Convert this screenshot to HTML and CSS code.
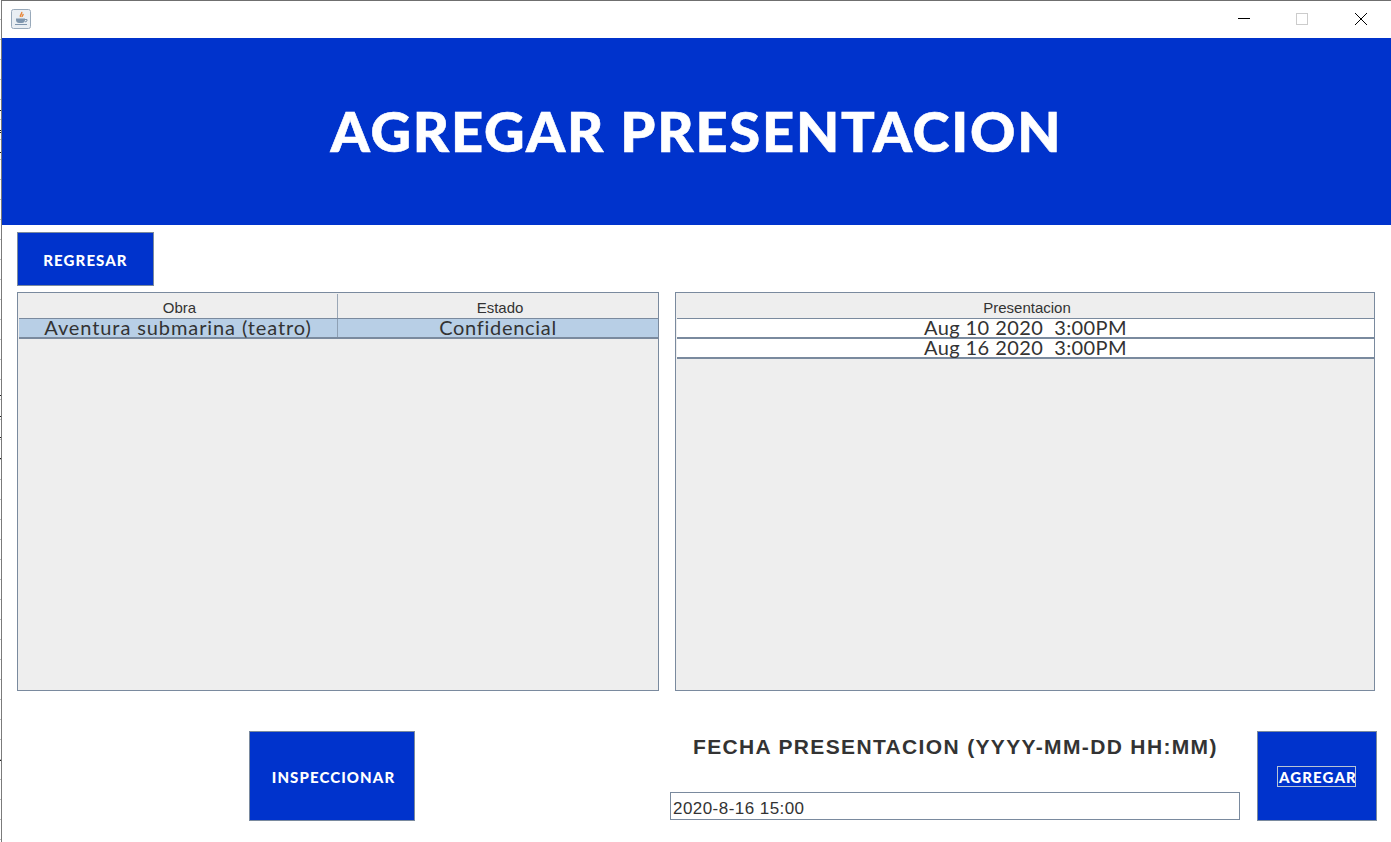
FILE: index.html
```html
<!DOCTYPE html>
<html lang="es">
<head>
<meta charset="utf-8">
<title>Agregar presentacion</title>
<link rel="stylesheet" href="styles.css">
</head>
<body>
<div class="window">
  <header class="titlebar">
    <svg class="app-icon" width="20" height="20" viewBox="0 0 20 20">
      <rect x="0.5" y="0.5" width="19" height="19" rx="2" fill="#e9eef3" stroke="#98a9ba"/>
      <path d="M10.500 3c1.500 1.500-2 2.500-1 5M12 5c.5 1.200-1.200 1.500-.8 3" fill="none" stroke="#e8873a" stroke-width="1.500"/>
      <path d="M5 9.500h9v1.500c0 1.800-1.500 3-3 3H8c-1.500 0-3-1.200-3-3z" fill="#7e95ad"/>
      <path d="M14 10.500h2v1.500l-2 1M4 15.500h12" fill="none" stroke="#7e95ad"/>
    </svg>
    <div class="win-controls">
      <svg width="14" height="14" viewBox="0 0 14 14"><path d="M0 6.500h12" stroke="#000" fill="none"/></svg>
      <svg width="14" height="14" viewBox="0 0 14 14"><rect x="0.500" y="1.500" width="11" height="11" stroke="#ccc" fill="none"/></svg>
      <svg width="14" height="14" viewBox="0 0 14 14"><path d="M1 1l12 12M13 1L1 13" stroke="#000" fill="none"/></svg>
    </div>
  </header>
  <div class="banner"><h1>AGREGAR PRESENTACION</h1></div>
  <main class="content">
    <div class="back-row"><button class="btn btn-back">REGRESAR</button></div>
    <div class="tables">
      <section class="table-box table-left">
        <div class="row head"><div class="cell">Obra</div><div class="cell">Estado</div></div>
        <div class="row data selected"><div class="cell">Aventura submarina (teatro)</div><div class="cell">Confidencial</div></div>
      </section>
      <section class="table-box table-right">
        <div class="row head"><div class="cell">Presentacion</div></div>
        <div class="row data plain"><div class="cell">Aug 10 2020 &nbsp;3:00PM</div></div>
        <div class="row data plain"><div class="cell">Aug 16 2020 &nbsp;3:00PM</div></div>
      </section>
    </div>
    <div class="bottom">
      <button class="btn btn-inspect">INSPECCIONAR</button>
      <div class="date-group">
        <label class="date-label" for="fecha">FECHA PRESENTACION (YYYY-MM-DD HH:MM)</label>
        <input class="date-input" id="fecha" type="text" value="2020-8-16 15:00">
      </div>
      <button class="btn btn-add"><span class="focus">AGREGAR</span></button>
    </div>
  </main>
</div>
</body>
</html>
```
FILE: styles.css
```css
* { box-sizing: border-box; }
html, body { margin: 0; padding: 0; background: #fff; }
body {
  width: 1391px;
  height: 842px;
  overflow: hidden;
  background-color: #fff;
  background-image:
    linear-gradient(#222, #222), linear-gradient(#222, #222), linear-gradient(#222, #222),
    linear-gradient(#222, #222), linear-gradient(#222, #222), linear-gradient(#222, #222),
    linear-gradient(#222, #222), linear-gradient(#222, #222), linear-gradient(#222, #222),
    repeating-linear-gradient(#fff 0 19px, #bbb 19px 20px);
  background-size: 1px 1px, 1px 1px, 1px 1px, 1px 1px, 1px 1px, 1px 1px, 1px 1px, 1px 1px, 1px 1px, 1px 842px;
  background-position: 0 110px, 0 130px, 0 132px, 0 152px, 0 395px, 0 416px, 0 437px, 0 458px, 0 760px, 0 0;
  background-repeat: no-repeat;
}

.window {
  width: 1390px;
  height: 842px;
  margin-left: 1px;
  border-top: 1px solid #6f6f6f;
  border-left: 1px solid #7b7b7b;
  display: flex;
  flex-direction: column;
  background: #fff;
}

.titlebar {
  height: 37px;
  flex: none;
  display: flex;
  align-items: flex-start;
  justify-content: space-between;
  padding: 8px 0 0 9px;
}
.app-icon { display: block; }
.win-controls {
  display: flex;
  gap: 44px;
  padding: 3px 23px 0 0;
}
.win-controls svg { display: block; }

.banner {
  height: 187px;
  flex: none;
  background: #0033cc;
  display: flex;
  align-items: center;
  justify-content: center;
}
.banner h1 {
  margin: 0;
  color: #fff;
  font: 900 56px "Lato", sans-serif;
  letter-spacing: 1.800px;
  -webkit-text-stroke: .6px #fff;
  position: relative;
  top: -1px;
}

.content {
  flex: 1;
  padding: 7px 14px 0 15px;
  display: flex;
  flex-direction: column;
}

.btn {
  background: #0033cc;
  border: 1px solid #7a8a9e;
  color: #fff;
  font: 900 15px "Lato", sans-serif;
  letter-spacing: 1.100px;
  padding: 2px 0 0;
}
.back-row { height: 54px; flex: none; }
.btn-back { width: 137px; height: 54px; }

.tables {
  margin-top: 6px;
  display: flex;
  gap: 16px;
  height: 399px;
  flex: none;
}
.table-box {
  background: #eeeeee;
  border: 1px solid #7a8a9e;
  padding: 1px 0 0 1px;
}
.table-left { width: 642px; }
.table-right { width: 700px; }

.row { display: flex; }
.cell {
  flex: 1;
  text-align: center;
  min-width: 0;
  white-space: nowrap;
}
.head {
  height: 25px;
  border-bottom: 1px solid #7a8a9e;
}
.head .cell {
  font: 15px/28px "Liberation Sans", sans-serif;
  color: #333;
  height: 24px;
  padding-left: 3px;
}
.head .cell + .cell { border-left: 1px solid #9aa7b6; padding-left: 4px; }
.table-left .cell:first-child { flex: none; width: 318px; }

.data {
  height: 20px;
  border-bottom: 2px solid #7a8a9e;
}
.data .cell {
  font: 20px/16px "Lato", sans-serif;
  color: #333;
  height: 18px;
  letter-spacing: .9px;
}
.selected .cell + .cell { letter-spacing: .7px; }
.plain .cell { letter-spacing: .4px; }
.selected { background: #b8cfe6; }
.selected .cell + .cell { border-left: 1px solid #8ea0b4; }
.plain { background: #fff; }

.bottom {
  margin-top: 40px;
  display: flex;
  align-items: flex-start;
  padding-left: 232px;
}
.btn-inspect { width: 166px; height: 90px; flex: none; padding-left: 3px; }
.date-group {
  margin-left: 255px;
  width: 570px;
  flex: none;
  display: flex;
  flex-direction: column;
}
.date-label {
  display: block;
  height: 61px;
  padding: 3px 0 0 23px;
  font: 700 21px/26px "Liberation Sans", sans-serif;
  letter-spacing: 1.350px;
  color: #333;
  white-space: nowrap;
}
.date-input {
  width: 570px;
  height: 28px;
  border: 1px solid #7a8a9e;
  padding: 5px 2px 0;
  font: 17px "Liberation Sans", sans-serif;
  letter-spacing: .45px;
  color: #333;
  outline: none;
}
.btn-add {
  margin-left: 17px;
  width: 120px;
  height: 90px;
  flex: none;
  display: flex;
  align-items: center;
  justify-content: center;
  padding: 1px 1px 0 0;
}
.focus {
  width: 79px;
  height: 21px;
  border: 1px solid #b8c4d4;
  line-height: 21px;
  white-space: nowrap;
  overflow: hidden;
  text-align: left;
  padding-left: 1px;
}
```
